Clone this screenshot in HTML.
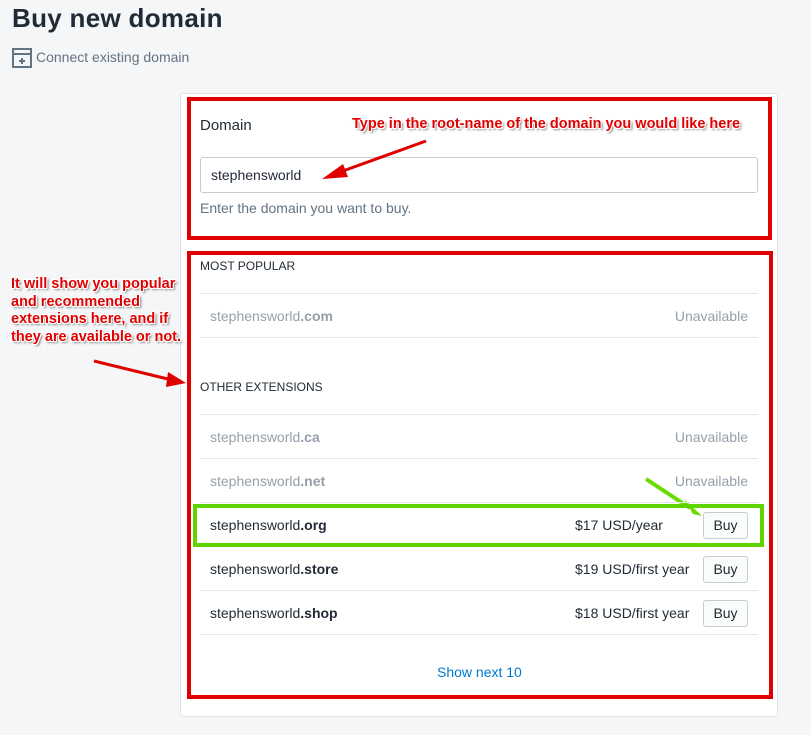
<!DOCTYPE html>
<html><head><style>
body{margin:0;width:811px;height:735px;background:#f4f6f8;font-family:"Liberation Sans",sans-serif;position:relative;overflow:hidden;color:#212b36}
.a{position:absolute}
h1{position:absolute;left:12px;top:3px;margin:0;font-size:26px;font-weight:bold;color:#212b36;letter-spacing:0.3px}
.card{left:180px;top:93px;width:598px;height:624px;background:#fff;border:1px solid #dfe3e8;border-radius:3px;box-sizing:border-box}
.red{border:4px solid #e00000;box-sizing:border-box}
.row{left:200px;width:558px;height:44px;border-top:1px solid #e3e6ea}
.row .n{position:absolute;left:10px;top:14px;font-size:14px}
.row .u{position:absolute;right:10px;top:14px;font-size:14px;color:#959fab}
.row .p{position:absolute;left:375px;top:14px;font-size:14px}
.btn{position:absolute;right:10px;top:9px;width:45px;height:27px;border:1px solid #c4cdd5;border-radius:3px;box-sizing:border-box;font-size:14px;text-align:center;line-height:25px;background:#fafbfb}
.ann{color:#e00000;font-weight:bold;font-size:14.5px;text-shadow:1px 1px 0 #fff,-1px -1px 0 #fff,1px -1px 0 #fff,-1px 1px 0 #fff,2px 2px 2px #777}
.g{color:#959fab}
</style></head><body>
<h1>Buy new domain</h1>
<svg class="a" style="left:12px;top:48px" width="20" height="20" viewBox="0 0 20 20"><rect x="1" y="1" width="18" height="18" fill="none" stroke="#637381" stroke-width="2"/><line x1="1" y1="6" x2="19" y2="6" stroke="#637381" stroke-width="2"/><path d="M10 10v6M7 13h6" stroke="#637381" stroke-width="2"/></svg>
<div class="a" style="left:36px;top:49px;font-size:14px;color:#637381">Connect existing domain</div>
<div class="a card"></div>
<div class="a red" style="left:187px;top:97px;width:585px;height:143px"></div>
<div class="a" style="left:200px;top:117px;font-size:15px">Domain</div>
<div class="a ann" style="left:352px;top:116px">Type in the root-name of the domain you would like here</div>
<div class="a" style="left:200px;top:157px;width:558px;height:36px;border:1px solid #c4cdd5;border-radius:3px;box-sizing:border-box;background:#fff"></div>
<div class="a" style="left:211px;top:167px;font-size:14px">stephensworld</div>
<div class="a" style="left:200px;top:200px;font-size:14px;color:#637381">Enter the domain you want to buy.</div>
<svg class="a" style="left:0;top:0" width="811" height="735"><path d="M426 141 L340 172" stroke="#e00000" stroke-width="3"/><path d="M322 179 L343 164 L348 177Z" fill="#e00000"/>
<path d="M94 361 L172 380" stroke="#e00000" stroke-width="3"/><path d="M186 383 L168 372 L166 387Z" fill="#e00000"/>
<path d="M646 479 L690 508" stroke="#6adc00" stroke-width="4"/><path d="M702 516 L684 499 L693 514 L680 511Z" fill="#6adc00"/></svg>
<div class="a red" style="left:187px;top:251px;width:586px;height:448px"></div>
<div class="a ann" style="left:11px;top:276px;line-height:17.5px">It will show you popular<br>and recommended<br>extensions here, and if<br>they are available or not.</div>
<div class="a" style="left:200px;top:259px;font-size:12px">MOST POPULAR</div>
<div class="a row" style="top:293px"><span class="n g">stephensworld<b>.com</b></span><span class="u">Unavailable</span></div>
<div class="a" style="left:200px;top:337px;width:558px;border-top:1px solid #e3e6ea"></div>
<div class="a" style="left:200px;top:380px;font-size:12px">OTHER EXTENSIONS</div>
<div class="a row" style="top:414px"><span class="n g">stephensworld<b>.ca</b></span><span class="u">Unavailable</span></div>
<div class="a row" style="top:458px"><span class="n g">stephensworld<b>.net</b></span><span class="u">Unavailable</span></div>
<div class="a row" style="top:502px"><span class="n">stephensworld<b>.org</b></span><span class="p">$17 USD/year</span><span class="btn">Buy</span></div>
<div class="a row" style="top:546px"><span class="n">stephensworld<b>.store</b></span><span class="p">$19 USD/first year</span><span class="btn">Buy</span></div>
<div class="a row" style="top:590px"><span class="n">stephensworld<b>.shop</b></span><span class="p">$18 USD/first year</span><span class="btn">Buy</span></div>
<div class="a" style="left:200px;top:634px;width:558px;border-top:1px solid #e3e6ea"></div>
<div class="a" style="left:437px;top:664px;font-size:14px;color:#007ace">Show next 10</div>
<div class="a" style="left:193px;top:504px;width:571px;height:43px;border:4px solid #5fd400;box-sizing:border-box"></div>
</body></html>
